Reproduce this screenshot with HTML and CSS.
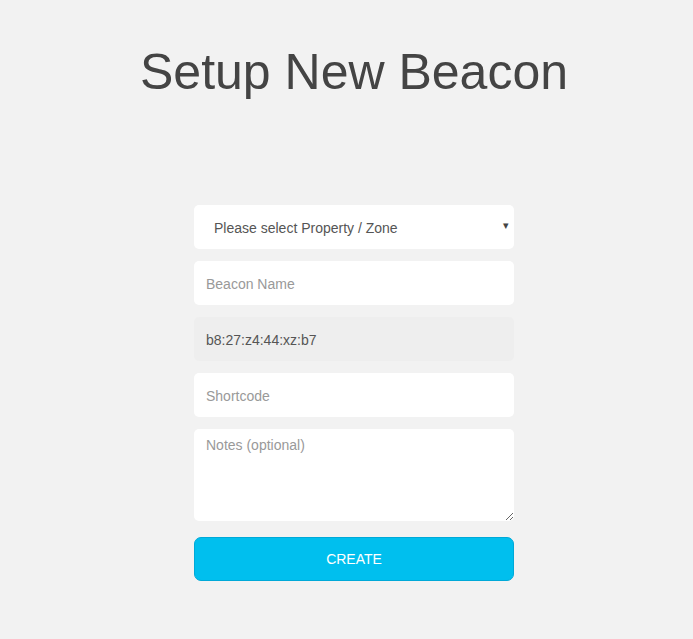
FILE: index.html
```html
<!DOCTYPE html>
<html>
<head>
<meta charset="utf-8">
<link rel="stylesheet" href="styles.css">
</head>
<body>
<div class="page">
  <h1 class="title">Setup New Beacon</h1>
  <form class="form">
    <div class="select-wrap">
      <select class="field select">
        <option>Please select Property / Zone</option>
      </select>
      <span class="arrow">▾</span>
    </div>
    <input class="field" type="text" placeholder="Beacon Name">
    <input class="field field-disabled" type="text" value="b8:27:z4:44:xz:b7" disabled>
    <input class="field" type="text" placeholder="Shortcode">
    <textarea class="field notes" placeholder="Notes (optional)"></textarea>
    <button class="btn" type="button">CREATE</button>
  </form>
</div>
</body>
</html>
```
FILE: styles.css
```css
html, body {
  margin: 0;
  padding: 0;
  background: #f2f2f2;
  font-family: "Liberation Sans", Arial, sans-serif;
}
.page {
  display: flex;
  flex-direction: column;
  align-items: center;
  padding: 40px 0 0 15px;
}
.title {
  margin: 0;
  font-weight: normal;
  font-size: 50px;
  line-height: 64px;
  color: #444;
}
.form {
  margin-top: 101px;
  width: 320px;
  display: flex;
  flex-direction: column;
  gap: 12px;
}
.field {
  box-sizing: border-box;
  width: 100%;
  height: 44px;
  border: none;
  border-radius: 5px;
  background: #fff;
  padding: 2px 12px 0;
  font-family: "Liberation Sans", Arial, sans-serif;
  font-size: 14px;
  color: #555;
  outline: none;
  margin: 0;
}
.field::placeholder {
  color: #999;
}
.field-disabled {
  background: #eee;
  color: #555;
  -webkit-text-fill-color: #555;
  opacity: 1;
}
.select-wrap {
  position: relative;
}
.select {
  appearance: none;
  -webkit-appearance: none;
  padding-left: 20px;
  color: #555;
}
.arrow {
  position: absolute;
  right: 5px;
  top: 14px;
  font-size: 11px;
  line-height: 12px;
  color: #444;
  pointer-events: none;
}
.notes {
  height: 92px;
  padding: 8px 12px;
  resize: vertical;
  display: block;
}
.btn {
  margin-top: 4px;
  height: 44px;
  width: 100%;
  border: 1px solid #00a9d8;
  border-radius: 7px;
  background: #00bfee;
  color: #fff;
  font-family: "Liberation Sans", Arial, sans-serif;
  font-size: 14px;
  cursor: pointer;
}
```
